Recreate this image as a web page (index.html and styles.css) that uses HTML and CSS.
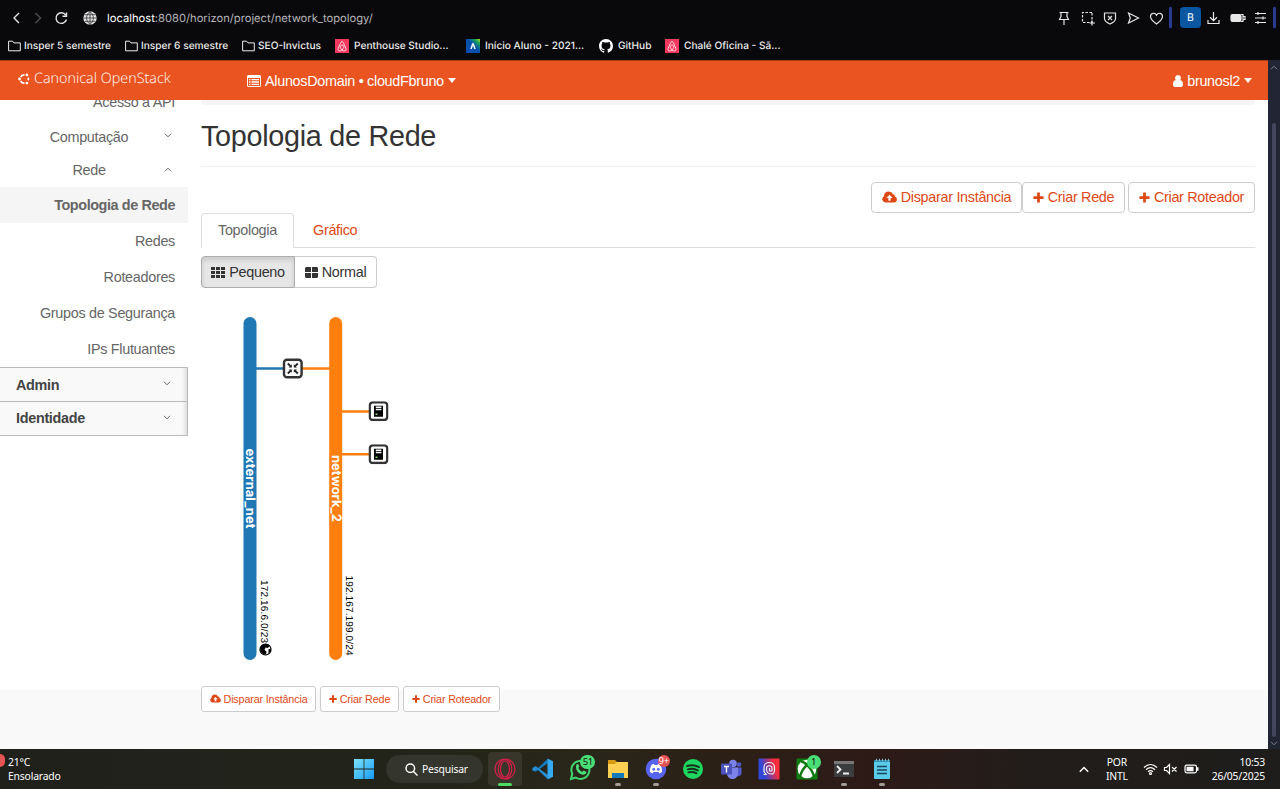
FILE: index.html
```html
<!DOCTYPE html>
<html lang="pt-BR">
<head>
<meta charset="utf-8">
<title>Topologia de Rede</title>
<link rel="stylesheet" href="styles.css">
</head>
<body>
<svg class="defs" width="0" height="0">
  <defs>
    <symbol id="cloud" viewBox="0 0 15 12"><path fill="currentColor" fill-rule="evenodd" d="M3.600 11.500A3.300 3.300 0 0 1 2 5.300C2 2.500 4 .6 6.600 .6c2 0 3.500 1 4.100 2.800 1.400-.2 2.300.8 2.200 2.200 1.200.5 2 1.500 2 2.900 0 1.700-1.300 3-3 3zM7.500 3.800 4.400 6.900h2v2.800h2.200V6.900h2z"/></symbol>
    <symbol id="plus" viewBox="0 0 12 12"><path fill="currentColor" d="M4.500 .5h3v4h4v3h-4v4h-3v-4h-4v-3h4z"/></symbol>
    <symbol id="folder" viewBox="0 0 13 12"><path fill="none" stroke="currentColor" d="M.6 10.800V1.200h4l1.400 1.700h6.300v7.900z"/></symbol>
    <symbol id="airbnb" viewBox="0 0 14 14"><path fill="#f5385d" d="M0 0h14v14H0z"/><path fill="none" stroke="#fff" stroke-width=".8" d="M7 11C4.800 8.700 4.500 6.200 7 6.200S9.200 8.700 7 11c-1.700 1.700-4.700 1-3.900-1.500C3.600 8 5.400 4.500 6 3.200c.4-1 1.600-1 2 0 .6 1.300 2.400 4.800 2.900 6.300.8 2.500-2.200 3.200-3.900 1.500z"/></symbol>
    <symbol id="chev" viewBox="0 0 8 5"><path fill="none" stroke="currentColor" d="M1 .8 4 3.800 7 .8"/></symbol>
    <symbol id="server" viewBox="0 0 20 20"><rect x="1.200" y="1.200" width="17.600" height="17.600" rx="3" fill="#fff" stroke="#333" stroke-width="2.400"/><path d="M5.500 4.500h9v11h-9z"/><path fill="#fff" d="M7.300 5.200h5.600v1.500H7.300zM7.300 7.500h5.600V9H7.300z"/><path fill="#7d5" d="M7 12.300h2v1.500H7z"/></symbol>
  </defs>
</svg>

<div class="browser">
  <div class="toolbar">
    <svg class="nav" width="76" height="20" viewBox="0 0 76 20" fill="none" stroke="#e4e4e4" stroke-width="1.400"><path d="M12 5 7 10l5 5"/><path stroke="#4e4e50" d="m28.500 5 5 5-5 5"/><path d="M58.700 7A5.300 5.300 0 1 0 59.500 11.500M59.500 4.500v3.700h-4"/></svg>
    <svg class="globe" width="14" height="14" viewBox="0 0 14 14"><circle cx="7" cy="7" r="6.700" fill="#e4e4e4"/><path fill="none" stroke="#333" stroke-width=".8" d="M7 0v14M.5 7h13M1.500 3.700h11M1.500 10.300h11M7 .5C2.500 4 2.500 10 7 13.500M7 .5c4.500 3.500 4.500 9.500 0 13"/></svg>
    <div class="url"><span class="host">localhost</span>:8080/horizon/project/network_topology/</div>
    <svg class="tools" width="106" height="16" viewBox="0 0 106 16" fill="none" stroke="#e4e4e4" stroke-width="1.200"><path d="M3.500 2.500h9M5 2.500v4L3.500 9.500h9L11 6.500v-4M8 9.500V15"/><path stroke-dasharray="2.500 1.500" d="M36 2.500h-9.500v10H36v-10"/><path d="M36 10.500v5M33.500 13H39"/><path d="M48.500 3h11v5.500c0 3-3 4.500-5.500 5.500-2.500-1-5.500-2.500-5.500-5.500zM52 6l4 4M56 6l-4 4"/><path d="m72.500 3 10 5-10 5 1.800-5z"/><path d="M100.500 14C97 11.500 94.500 9 94.500 6.500c0-3.500 4.500-4.500 6-1.300 1.500-3.200 6-2.200 6 1.300 0 2.500-2.500 5-6 7.500z"/></svg>
    <span class="divider"></span>
    <span class="profile">B</span>
    <svg class="tools2" width="56" height="16" viewBox="0 0 56 16" fill="none" stroke="#e8e8e8" stroke-width="1.200"><path d="M6.500 2v8.500M3 7.300l3.500 3.400L10 7.300M1 10v3.500h11V10"/><rect x="24" y="4.500" width="10" height="7" rx="1.500" fill="#e8e8e8"/><path d="M34 4.500h2v7h-2M36.500 6.500H38v3h-1.500"/><path d="M48 3.500h11M48 8h11M48 12.500h11M51 2v3M56 6.500v3M51 11v3"/></svg>
    <span class="divider end"></span>
  </div>
  <div class="bookmarks">
    <span class="bm bm-folder"><svg width="13" height="12"><use href="#folder"/></svg>Insper 5 semestre</span>
    <span class="bm bm-folder"><svg width="13" height="12"><use href="#folder"/></svg>Insper 6 semestre</span>
    <span class="bm bm-seo"><svg width="13" height="12"><use href="#folder"/></svg>SEO-Invictus</span>
    <span class="bm bm-site bm-pent"><svg width="14" height="14"><use href="#airbnb"/></svg>Penthouse Studio...</span>
    <span class="bm bm-site bm-inicio"><svg width="14" height="14" viewBox="0 0 14 14"><defs><linearGradient id="ga" x1="0" y1="1" x2="1" y2="0"><stop offset=".55" stop-color="#0750ae"/><stop offset=".8" stop-color="#16a05a"/><stop offset="1" stop-color="#b6dc20"/></linearGradient></defs><path fill="url(#ga)" d="M0 0h14v14H0z"/><path fill="none" stroke="#fff" stroke-width="1.500" d="m5 10 1.700-5h.6L9 10"/></svg>Início Aluno - 2021...</span>
    <span class="bm bm-site bm-git"><svg width="14" height="14" viewBox="0 0 16 16"><path fill="#fff" d="M8 0C3.580 0 0 3.580 0 8c0 3.540 2.290 6.530 5.470 7.590.4.070.55-.17.55-.38 0-.19-.01-.82-.01-1.490-2.010.37-2.530-.49-2.690-.94-.09-.23-.48-.94-.82-1.130-.28-.15-.68-.52-.01-.53.63-.01 1.080.58 1.230.82.72 1.210 1.870.87 2.330.66.07-.52.28-.87.51-1.070-1.780-.2-3.640-.89-3.640-3.950 0-.87.31-1.590.82-2.150-.08-.2-.36-1.020.08-2.120 0 0 .67-.21 2.200.82a7.600 7.600 0 0 1 4 0c1.530-1.040 2.200-.82 2.200-.82.44 1.100.16 1.920.08 2.120.51.560.82 1.270.82 2.150 0 3.070-1.870 3.750-3.650 3.950.29.25.54.73.54 1.480 0 1.070-.01 1.930-.01 2.200 0 .21.15.46.55.38A8.010 8.010 0 0 0 16 8c0-4.420-3.580-8-8-8z"/></svg>GitHub</span>
    <span class="bm bm-site"><svg width="14" height="14"><use href="#airbnb"/></svg>Chalé Oficina - Sã...</span>
  </div>
</div>

<div class="viewport">
  <div class="page">
    <header class="header">
      <div class="brand"><svg width="12" height="12" viewBox="0 0 12 12" fill="none" stroke="#fff" stroke-width="1.700"><path d="M2.600 4A4 4 0 0 1 6.500 1.900M10.200 4.600a4 4 0 0 1 0 2.800M6.500 10.100A4 4 0 0 1 2.600 8"/><g fill="#fff" stroke="none"><circle cx="1.500" cy="6" r="1.400"/><circle cx="8.900" cy="1.900" r="1.400"/><circle cx="8.900" cy="10.100" r="1.400"/></g></svg><span>Canonical OpenStack</span></div>
      <div class="project"><svg width="14" height="12" viewBox="0 0 14 12"><path fill="#fff" fill-rule="evenodd" d="M1 0h12l1 1v10l-1 1H1l-1-1V1zm0 3v8h12V3z"/><path stroke="#fff" stroke-width="1.300" d="M2 4.600h1.500M4.500 4.600H12M2 7h1.500M4.500 7H12M2 9.400h1.500M4.500 9.400H12"/></svg><span>AlunosDomain • cloudFbruno</span><i class="caret"></i></div>
      <div class="user"><svg width="10" height="12" viewBox="0 0 10 12"><path fill="#fff" d="M5 0a3 3 0 0 1 2.200 5C9 5.200 10 6.800 10 9.500 10 11 9.300 12 8 12H2C.7 12 0 11 0 9.500 0 6.800 1 5.200 2.800 5A3 3 0 0 1 5 0z"/></svg><span>brunosl2</span><i class="caret"></i></div>
    </header>
    <div class="body">
      <nav class="sidebar">
        <div class="sub first">Acesso a API</div>
        <div class="group">Computação<svg class="chev" width="8" height="5"><use href="#chev"/></svg></div>
        <div class="group">Rede<svg class="chev up" width="8" height="5"><use href="#chev"/></svg></div>
        <div class="sub active">Topologia de Rede</div>
        <div class="sub">Redes</div>
        <div class="sub">Roteadores</div>
        <div class="sub">Grupos de Segurança</div>
        <div class="sub">IPs Flutuantes</div>
        <div class="panel">Admin<svg class="chev" width="8" height="5"><use href="#chev"/></svg></div>
        <div class="panel">Identidade<svg class="chev" width="8" height="5"><use href="#chev"/></svg></div>
      </nav>
      <main class="content">
        <div class="crumb"></div>
        <h1 class="title">Topologia de Rede</h1>
        <div class="actions">
          <span class="btn b1"><svg width="15" height="12"><use href="#cloud"/></svg><span>Disparar Instância</span></span>
          <span class="btn b2"><svg width="11" height="11"><use href="#plus"/></svg><span>Criar Rede</span></span>
          <span class="btn b3"><svg width="11" height="11"><use href="#plus"/></svg><span>Criar Roteador</span></span>
        </div>
        <div class="tabs"><span class="tab on">Topologia</span><span class="tab">Gráfico</span></div>
        <div class="toggle">
          <span class="tg pressed"><svg width="14" height="11" viewBox="0 0 14 11"><path fill="#333" d="M0 0h4v3H0zM5 0h4v3H5zM10 0h4v3h-4zM0 4h4v3H0zM5 4h4v3H5zM10 4h4v3h-4zM0 8h4v3H0zM5 8h4v3H5zM10 8h4v3h-4z"/></svg><span>Pequeno</span></span>
          <span class="tg"><svg width="13" height="11" viewBox="0 0 13 11"><path fill="#333" d="M1 0h5v5H0V1zM7 0h5l1 1v4H7zM0 6h6v5H1l-1-1zM7 6h6v4l-1 1H7z"/></svg><span>Normal</span></span>
        </div>
        <svg class="topology" width="300" height="372" viewBox="0 0 300 372">
          <path stroke="#1f77b4" stroke-width="2.600" d="M49 68.500h40"/>
          <path stroke="#ff7f0e" stroke-width="2.600" d="M95 68.500h40M135 111.500h40M135 154.300h40"/>
          <rect x="42.500" y="17" width="13" height="343" rx="6.500" fill="#1f77b4"/>
          <rect x="128.200" y="17" width="13" height="343" rx="6.500" fill="#ff7f0e"/>
          <g transform="translate(81.800 58.500)"><rect x="1.200" y="1.200" width="17.600" height="17.600" rx="3" fill="#fff" stroke="#333" stroke-width="2.400"/><path fill="none" stroke="#222" stroke-width="1.800" d="m5 5 3.200 3.200M15 5l-3.200 3.200M5 15l3.200-3.200M15 15l-3.200-3.200"/><path fill="#222" d="M9 5.800V9H5.800zM11 14.200V11h3.200zM11 5.800V9h3.200zM5.800 11H9v3.200z"/></g>
          <use href="#server" x="167.500" y="101.200" width="20" height="20"/>
          <use href="#server" x="167.500" y="144.200" width="20" height="20"/>
          <text class="net" transform="translate(45.300 148.500) rotate(90)" textLength="80">external_net</text>
          <text class="net" transform="translate(131 155) rotate(90)" textLength="67">network_2</text>
          <text class="cidr" transform="translate(59.700 280) rotate(90)" textLength="63">172.16.6.0/23</text>
          <text class="cidr" transform="translate(145.200 275.500) rotate(90)" textLength="80">192.167.199.0/24</text>
          <g transform="translate(64.500 349.500)"><circle r="5.500" fill="#fff" stroke="#000" stroke-width="1.200"/><path d="M-4.500-3.500C-2-6 2-6 4-4L2.500-1.500 0-2-1 .5l2 1.500L.5 5C-3 5-5.500 2-5.300-1zM3 0l2-1 .3 2.500L3 4z"/></g>
        </svg>
        <div class="small">
          <span class="btn-s"><svg width="11" height="9"><use href="#cloud"/></svg><span>Disparar Instância</span></span>
          <span class="btn-s s2"><svg width="8" height="8"><use href="#plus"/></svg><span>Criar Rede</span></span>
          <span class="btn-s s3"><svg width="8" height="8"><use href="#plus"/></svg><span>Criar Roteador</span></span>
        </div>
      </main>
    </div>
  </div>
  <div class="scroll"><svg width="8" height="5"><use href="#chev" transform="rotate(180 4 2.500)"/></svg><i class="thumb"></i><svg width="8" height="5"><use href="#chev"/></svg></div>
</div>

<footer class="taskbar">
  <div class="weather"><i></i><div>21°C<br>Ensolarado</div></div>
  <svg class="win" width="20" height="20" viewBox="0 0 20 20"><defs><linearGradient id="gw" gradientUnits="userSpaceOnUse" x2="20" y2="20"><stop stop-color="#7ce4fd"/><stop offset="1" stop-color="#169bf2"/></linearGradient></defs><path fill="url(#gw)" d="M0 0h9.600v9.600H0zM10.400 0H20v9.600h-9.600zM0 10.400h9.600V20H0zM10.400 10.400H20V20h-9.600z"/></svg>
  <div class="search"><svg width="13" height="13" viewBox="0 0 13 13" fill="none" stroke="#fff" stroke-width="1.500"><circle cx="5.300" cy="5.300" r="4.300"/><path d="m8.500 8.500 4 4"/></svg><span>Pesquisar</span></div>
  <div class="apps">
    <span class="app current"><svg width="24" height="24" viewBox="0 0 24 24" fill="none" stroke="#d91f4a" stroke-width="1.200"><circle cx="12" cy="12" r="10"/><ellipse cx="12" cy="12" rx="4.500" ry="8"/><ellipse cx="12" cy="12" rx="6.800" ry="9.500"/></svg></span>
    <span class="app"><svg width="24" height="24" viewBox="0 0 24 24"><path fill="#1479be" d="M16.500 2 6 12 3 9.800l-1.500 1v1.400L4.500 15 17 6z"/><path fill="#2490d5" d="M16.500 22 6 12l-3 2.200-1.500-1v-1.400L4.500 9 17 18z"/><path fill="#35a9f0" d="m16.500 1.500 5.500 2.700v15.600l-5.500 2.700z"/></svg></span>
    <span class="app"><svg width="28" height="28" viewBox="0 0 28 28"><path fill="none" stroke="#3fd56c" stroke-width="2" d="m5 24 1.300-5.200A9 9 0 1 1 9.800 22.600z"/><path fill="#4ade76" d="M10.500 9.500c1.500-1.500 2.300 0 2.800 2l-1 1.500c1 2 2 3 4 3.800l1.500-1.300 2.700 1.500c-.5 3-3.500 3.300-6 2-3.500-1.700-5.500-5.500-4-9.500z"/></svg><b class="badge green wide">51</b></span>
    <span class="app run"><svg width="24" height="24" viewBox="0 0 24 24"><path fill="#d99a13" d="M2 3h7l2 2h11v6H2z"/><path fill="#ffd052" d="M2 7h7l2-2h11v16H2z"/><path fill="#1479b8" d="M6 16h12v5H6z"/></svg></span>
    <span class="app run"><svg width="24" height="24" viewBox="0 0 24 24"><circle cx="12" cy="12" r="10.300" fill="#5865f2"/><path fill="#fff" d="M8 7.500 10 7l.5 1h3L14 7l2 .5c1.500 2 2.300 4.500 2 7.500l-2.500 1.500-1-1.500h-5l-1 1.500L6 15c-.3-3 .5-5.500 2-7.500z"/><circle cx="9.700" cy="12.300" r="1.400" fill="#5865f2"/><circle cx="14.300" cy="12.300" r="1.400" fill="#5865f2"/></svg><b class="badge red">9+</b></span>
    <span class="app"><svg width="24" height="24" viewBox="0 0 24 24"><circle cx="12" cy="12" r="10" fill="#1ed760"/><path fill="none" stroke="#15301c" stroke-linecap="round" stroke-width="1.900" d="M6 9c4-1.300 8.500-.9 12 1.100M6.800 12.300c3.500-1 7-.6 10 1.100M7.500 15.400c3-.8 5.500-.5 8 .9"/></svg></span>
    <span class="app"><svg width="24" height="24" viewBox="0 0 24 24"><circle cx="14" cy="6.500" r="3.800" fill="#7b83eb"/><circle cx="20" cy="7.500" r="2.300" fill="#5059c9"/><path fill="#5059c9" d="M16 10.500h6.500v5c0 4-4 4.500-6 3z"/><path fill="#7b83eb" d="M8 10.500h11V16c0 8-11 8-11 0z"/><rect x="2" y="6.500" width="11" height="11" rx="1" fill="#4b53bc"/><path stroke="#fff" stroke-width="1.400" d="M5 9.500h5M7.500 9.500v6"/></svg></span>
    <span class="app"><svg width="24" height="24" viewBox="0 0 24 24"><defs><linearGradient id="gf" y1=".6" y2=".3"><stop offset=".2" stop-color="#3047d8"/><stop offset=".8" stop-color="#fa2b3d"/></linearGradient></defs><path fill="url(#gf)" d="M1.500 1.500h21v21h-21z"/><path fill="none" stroke="#eee" stroke-width="1.200" d="M6.500 17.500H9l-2-3V10c0-6 10.500-6 10.500 0v3.500c0 2-1.500 3.500-3 3.500-3 0-5-2-5-4.500V11c0-3 5.500-3 5.500 0v3h-2.500v-3"/></svg></span>
    <span class="app"><svg width="24" height="24" viewBox="0 0 24 24"><rect x="1.500" y="1.500" width="21" height="21" rx="1" fill="#107c10"/><circle cx="12" cy="12" r="9.300" fill="#fff"/><path fill="none" stroke="#107c10" stroke-width="2.500" d="M5 19.500C6.500 14 9 10.500 12 8c3 2.500 5.500 6 7 11.500M6 4.500c2.500 0 4.500 2 6 3.500 1.500-1.500 3.500-3.500 6-3.500"/></svg><b class="badge green">1</b></span>
    <span class="app run"><svg width="24" height="24" viewBox="0 0 24 24"><path fill="#3b3c3e" d="M2 4h20v16H2z"/><path fill="#777" d="M2 4h20v3H2z"/><path fill="none" stroke="#eee" stroke-width="1.800" d="m5 9 3.500 3.500L5 16M11 16.500h6"/></svg></span>
    <span class="app run"><svg width="24" height="24" viewBox="0 0 24 24"><rect x="4" y="3" width="16" height="19" rx="1" fill="#5ccbea"/><path fill="#2d8ead" d="M4 3h16v2H4z"/><path stroke="#17475c" stroke-width="1.300" d="M7 9.500h10M7 13h10M7 16.500h10"/><path stroke="#8fb8c5" stroke-dasharray="1 2" stroke-width="2.500" d="M6 3h13"/></svg></span>
  </div>
  <svg class="up-arrow" width="10" height="7" viewBox="0 0 10 7"><path fill="none" stroke="#fff" stroke-width="1.400" d="m.8 5.800 4.200-4.300 4.200 4.300"/></svg>
  <div class="lang">POR<br>INTL</div>
  <svg class="status" width="56" height="14" viewBox="0 0 56 14" fill="none" stroke="#fff" stroke-width="1.200"><path d="M1 5.500c4-4 9-4 13 0M3 7.700c3-2.800 6-2.800 9 0M5 9.900c1.600-1.500 3.400-1.500 5 0"/><circle cx="7.500" cy="11.500" r="1"/><path d="M21.500 5.500h2l3-3v9l-3-3h-2zM29 5l4.500 4.500M33.500 5 29 9.500"/><rect x="42" y="3.200" width="11.500" height="7.600" rx="1.800"/><path fill="#fff" stroke="none" d="M43.500 4.700h7v4.600h-7zM54 5.300h1.500v3.400H54z"/></svg>
  <div class="clock">10:53<br>26/05/2025</div>
</footer>
</body>
</html>
```
FILE: styles.css
```css
* { box-sizing: border-box; }
body { margin: 0; width: 1280px; height: 789px; overflow: hidden; display: flex; flex-direction: column; font-family: "Liberation Sans", Arial, sans-serif; font-size: 14.400px; background: #fff; }
svg { display: block; flex: none; }
span, .lang, .clock { white-space: nowrap; }
.defs { position: absolute; }

/* Browser chrome */
.browser { height: 60px; flex: none; background: #09090b; color: #eee; font-family: Inter, sans-serif; text-rendering: geometricPrecision; }
.toolbar { height: 35px; display: flex; align-items: center; }
.nav { margin: 0 0 0 7px; }
.globe { margin-right: 10px; }
.url { font-size: 11.200px; color: #b5b5b8; flex: 1; }
.host { color: #fff; }
.tools { margin-right: 7px; overflow: visible; }
.divider { width: 3px; height: 21px; background: #2e3a8f; border-radius: 1px; }
.profile { width: 21px; height: 21px; margin: 0 6px 0 8px; border-radius: 4px; background: #0a56a0; color: #fff; font-size: 10.500px; text-align: center; line-height: 22px; }
.tools2 { overflow: visible; }
.end { margin: 0 4px 0 10px; }
.bookmarks { height: 21px; display: flex; align-items: center; padding-left: 8px; font-size: 10.150px; font-weight: 500; }
.bm { display: flex; align-items: center; gap: 3px; flex: none; }
.bm-folder { width: 117px; }
.bm-seo { width: 93px; }
.bm-site { gap: 5px; }
.bm-pent { width: 131px; }
.bm-inicio { width: 133px; }
.bm-git { width: 66px; }

/* Page */
.viewport { height: 689px; flex: none; display: flex; letter-spacing: -.3px; }
.page { width: 1268px; background: #f9f9f9; }
.header { height: 40px; background: #e95420; color: #fff; display: flex; align-items: center; border-top: 1px solid #a23d1c; padding: 0 16px 0 18px; }
.header > div { display: flex; align-items: center; }
.header > .brand { gap: 4px; width: 229px; font-family: "Open Sans", sans-serif; font-weight: 300; font-size: 14.400px; letter-spacing: 0; padding-bottom: 4px; text-rendering: geometricPrecision; }
.project { gap: 4px; flex: 1; }
.user { gap: 4px; }
.caret { width: 0; border: 4.500px solid transparent; border-top: 5px solid #fff; border-bottom: 0; }
.body { height: 590px; background: #fff; display: flex; overflow: visible; }
.sidebar { width: 188px; flex: none; height: 590px; overflow: hidden; color: #666; }
.sub { height: 36px; display: flex; align-items: center; justify-content: flex-end; padding-right: 13px; }
.first { margin-top: -16px; }
.active { background: #f5f5f5; font-weight: bold; color: #666; letter-spacing: -.4px; }
.group { height: 33.500px; display: flex; align-items: center; justify-content: center; padding-right: 10px; position: relative; }
.chev { position: absolute; right: 16px; top: 13px; color: #666; }
.up { transform: rotate(180deg); }
.panel { height: 35px; display: flex; align-items: center; padding-left: 16px; position: relative; border: 1px solid #bbb; border-left: 0; background: #f9f9f9; box-shadow: inset -5px 0 5px -4px #ccc; color: #444; font-weight: bold; }
.panel + .panel { height: 34px; border-top: 0; padding-bottom: 1px; }
.content { width: 1054px; margin-left: 13px; }
.crumb { height: 5px; background: #f5f5f5; border-radius: 0 0 4px 4px; }
.title { margin: 0; height: 62px; border-bottom: 1px solid #eee; font-weight: 400; font-size: 28.800px; line-height: 62px; color: #333; }
.actions { display: flex; justify-content: flex-end; margin-top: 15px; color: #dd4814; }
.btn { height: 31px; border: 1px solid #ccc; border-radius: 4px; display: flex; align-items: center; justify-content: center; gap: 4px; background: #fff; padding-bottom: 1px; }
.b1 { width: 151px; }
.b2 { width: 103px; }
.b3 { width: 127px; margin-left: 3px; }
.tabs { height: 35px; border-bottom: 1px solid #ddd; display: flex; color: #dd4814; }
.tab { height: 35px; line-height: 34px; padding: 0 19px; }
.on { width: 93px; padding: 0 0 0 16px; border: 1px solid #ddd; border-bottom-color: #fff; border-radius: 4px 4px 0 0; color: #666; background: #fff; line-height: 33px; }
.toggle { display: flex; margin-top: 8px; color: #333; }
.tg { height: 32px; width: 82px; display: flex; align-items: center; justify-content: center; gap: 4px; border: 1px solid #ccc; border-left: 0; border-radius: 0 4px 4px 0; }
.pressed { width: 94px; border: 1px solid #adadad; border-radius: 4px 0 0 4px; background: #e6e6e6; box-shadow: inset 0 3px 5px rgba(0,0,0,.125); }
.topology { margin: 12px 0 14px; overflow: visible; letter-spacing: 0; text-rendering: geometricPrecision; }
.net { font: bold 13px Inter, sans-serif; fill: #fff; }
.cidr { font: 10px "Liberation Sans", sans-serif; fill: #000; }
.small { display: flex; gap: 4px; font-size: 10.800px; letter-spacing: -.17px; color: #dd4814; }
.btn-s { width: 115px; height: 26px; border: 1px solid #ccc; border-radius: 3px; background: #fff; display: flex; align-items: center; justify-content: center; gap: 3px; padding-bottom: 1px; }
.s2 { width: 79px; }
.s3 { width: 97px; }
.scroll { width: 12px; background: #222533; display: flex; flex-direction: column; align-items: center; padding: 5px 0 3px; color: #7b7d8c; }
.thumb { width: 4px; flex: 1; margin: 53px 0 4px; background: #44465e; border-radius: 2px; }

/* Taskbar */
.taskbar { height: 40px; flex: none; display: flex; align-items: center; padding-right: 15px; background: linear-gradient(90deg, #20201b 0, #22241a 30%, #29261a 45%, #2c1f16 58%, #2d1a17 68%, #221d1a 80%, #1e1d1b); color: #fff; font: 10.400px/14px "Noto Sans", sans-serif; letter-spacing: -.2px; }
.weather { display: flex; align-items: center; width: 354px; }
.weather i { width: 5px; height: 13px; margin: -18px 3px 0 0; background: #e55353; border-radius: 0 7px 7px 0; }
.search { width: 97px; height: 28px; margin: 0 5px 0 12px; border-radius: 14px; background: #34352c; display: flex; align-items: center; gap: 4px; padding-left: 19px; }
.apps { display: flex; gap: 3.700px; }
.app { width: 34px; height: 34px; display: flex; align-items: center; justify-content: center; position: relative; }
.current { background: #38352a; border-radius: 4px; }
.current::after, .run::after { content: ""; position: absolute; bottom: 0; left: 14px; width: 6px; height: 3px; border-radius: 2px; background: #a39c96; }
.current::after { left: 10px; width: 14px; background: #4cd964; }
.badge { position: absolute; right: 3px; top: 3px; width: 14px; height: 14px; border-radius: 7px; font-weight: 400; font-size: 9.500px; line-height: 14px; text-align: center; }
.green { background: #4ade76; color: #111; }
.wide { width: 15px; right: 2px; }
.red { background: #e55353; width: 12px; height: 12px; line-height: 12px; }
.up-arrow { margin-left: auto; margin-right: 17px; }
.lang { text-align: center; }
.status { margin: 0 13px 0 15px; }
.clock { text-align: right; }
```
